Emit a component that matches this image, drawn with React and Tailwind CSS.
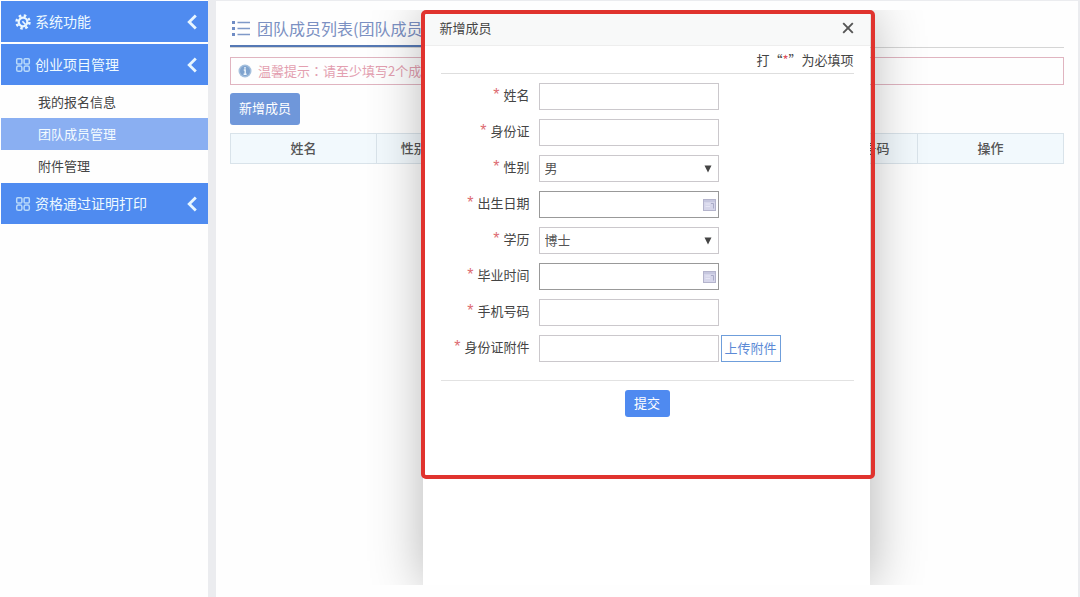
import { Fragment } from "react";

const subItems = [
  { label: "我的报名信息", active: false },
  { label: "团队成员管理", active: true },
  { label: "附件管理", active: false },
];

const fields = [
  { id: "name", label: "姓名", type: "text" },
  { id: "idcard", label: "身份证", type: "text" },
  { id: "gender", label: "性别", type: "select", options: ["男", "女"] },
  { id: "birthday", label: "出生日期", type: "date" },
  { id: "education", label: "学历", type: "select", options: ["博士", "硕士", "本科"] },
  { id: "graduation", label: "毕业时间", type: "date" },
  { id: "phone", label: "手机号码", type: "text" },
  { id: "attachment", label: "身份证附件", type: "file" },
];

function GearIcon() {
  return (
    <svg viewBox="0 0 16 16" className="size-4 shrink-0" fill="none" stroke="#eaf7ff">
      <circle cx="8" cy="8" r="4.3" strokeWidth="2.2" />
      <circle cx="8" cy="8" r="6.4" strokeWidth="2.6" strokeDasharray="2.5 2.527" />
      <path d="M7.4 7.2 10.6 10.6" strokeWidth="1.6" />
    </svg>
  );
}

function BlocksIcon() {
  return (
    <svg viewBox="0 0 16 16" className="size-4 shrink-0" fill="none" stroke="#b9dafa" strokeWidth="1.5">
      <rect x="1.7" y="1.7" width="5.2" height="5.2" rx="1" />
      <rect x="9.1" y="1.7" width="5.2" height="5.2" rx="1" />
      <rect x="1.7" y="9.1" width="5.2" height="5.2" rx="1.6" />
      <rect x="9.1" y="9.1" width="5.2" height="5.2" rx="1.6" />
    </svg>
  );
}

function Chevron() {
  return (
    <svg viewBox="0 0 10 16" className="ml-auto h-4 w-[10px] shrink-0" fill="none" stroke="#e8f6ff" strokeWidth="2.8">
      <path d="M8.8 1.4 2.2 8l6.600 6.600" />
    </svg>
  );
}

function ListIcon() {
  return (
    <svg viewBox="0 0 18 16" className="h-4 w-[18px] shrink-0" stroke="#7f99c8" fill="#6f8cc4">
      <path d="M5.500 2.500h12.500M5.500 8.500h12.500M5.500 14.500h12.500" strokeWidth="1.6" />
      <g stroke="none">
        <rect x="0" y="1" width="3" height="3" />
        <rect x="0" y="7" width="3" height="3" />
        <rect x="0" y="13" width="3" height="3" />
      </g>
    </svg>
  );
}

function InfoIcon() {
  return (
    <svg viewBox="0 0 14 14" className="size-[14px] shrink-0">
      <circle cx="7" cy="7" r="6.5" fill="#a3bfdd" />
      <circle cx="7" cy="7" r="5" fill="#7fa3ce" />
      <path d="M7 3v1.8M5.8 6h1.4v4.2M5.6 10.2h3" stroke="#eef5fc" strokeWidth="1.4" fill="none" />
    </svg>
  );
}

function CalendarIcon() {
  return (
    <svg viewBox="0 0 13 12" className="h-3 w-[13px]">
      <rect x="0.5" y="0.5" width="12" height="11" fill="#d6d6ea" stroke="#b4b4cc" />
      <path d="M1 2h11" stroke="#bfc1da" strokeWidth="1.4" />
      <path d="M8 4.500h2.500v5" stroke="#a9abc6" fill="none" />
      <path d="M2.500 5h4.500M2.500 7.500h4.500" stroke="#e6e6f5" />
    </svg>
  );
}

function NavGroup({ icon, label }) {
  return (
    <button type="button" className="flex h-[41px] w-full items-center gap-1 bg-[#4f8bf0] pr-[11px] pl-[14px] text-left text-sm text-[#eefaff]">
      {icon}
      <span className="pb-[2px]">{label}</span>
      <Chevron />
    </button>
  );
}

function Field({ field }) {
  const light = "h-[27px] w-[180px] border border-[#cbc8cc] bg-white px-[5px] pb-[2px] text-[13px] text-[#555] outline-none";
  const dark = "h-[27px] w-[180px] border border-[#999] bg-white px-[5px] pb-[2px] text-[13px] text-[#555] outline-none";
  if (field.type === "select") {
    return (
      <div className="relative w-[180px]">
        <select id={field.id} className={`${light} block appearance-none`}>
          {field.options.map((o) => (
            <option key={o}>{o}</option>
          ))}
        </select>
        <svg viewBox="0 0 8 8" className="pointer-events-none absolute top-[10px] right-[7px] size-2" fill="#444">
          <path d="M0.500 0.500h7L4 7.500z" />
        </svg>
      </div>
    );
  }
  if (field.type === "date") {
    return (
      <div className="relative w-[180px]">
        <input id={field.id} type="text" className={`${dark} block`} />
        <span className="pointer-events-none absolute inset-y-0 right-[3px] flex items-center">
          <CalendarIcon />
        </span>
      </div>
    );
  }
  if (field.type === "file") {
    return (
      <div className="flex items-center gap-[2px]">
        <input id={field.id} type="text" className={light} />
        <button type="button" className="h-[27px] w-[60px] border border-[#6f9edb] bg-white pb-[2px] text-[13px] whitespace-nowrap text-[#5c8ad6]">
          上传附件
        </button>
      </div>
    );
  }
  return <input id={field.id} type="text" className={light} />;
}

function MemberDialog() {
  return (
    <div role="dialog" aria-labelledby="dialog-title" className="relative flex h-full w-[447px] flex-col bg-white shadow-[1px_1px_50px_rgba(0,0,0,0.3)]">
      <header className="flex h-9 items-center justify-between border-b border-[#eee] bg-[#f8f9f9] pt-px pr-4 pl-[17px]">
        <h2 id="dialog-title" className="text-[13px] text-[#444]">新增成员</h2>
        <button type="button" aria-label="关闭" className="block">
          <svg viewBox="0 0 12 12" className="size-3" stroke="#555" strokeWidth="1.9">
            <path d="M1.200 1.200l9.600 9.600M10.800 1.200l-9.600 9.600" />
          </svg>
        </button>
      </header>
      <form className="pr-4 pl-[18px]" onSubmit={(e) => e.preventDefault()}>
        <p className="h-7 border-b border-[#dedede] text-right text-[13px] leading-7 text-[#444]">
          打“<span className="text-[#e0525c]">*</span>”为必填项
        </p>
        <div className="grid grid-cols-[89px_auto] items-center justify-start gap-x-[9px] gap-y-[9px] pt-[9px] pb-[18px]">
          {fields.map((f) => (
            <Fragment key={f.id}>
              <label htmlFor={f.id} className="pb-1 text-right text-[13px] leading-5 whitespace-nowrap text-[#444]">
                <span className="mr-1 font-['Liberation_Sans',sans-serif] text-base leading-5 text-[#dd6b72]">*</span>
                {f.label}
              </label>
              <Field field={f} />
            </Fragment>
          ))}
        </div>
        <div className="flex justify-center border-t border-[#e2e2e2] pt-[9px]">
          <button type="submit" className="h-[27px] w-[45px] rounded-[3px] bg-[#4f8af0] pb-[2px] text-[13px] text-white">
            提交
          </button>
        </div>
      </form>
      <div className="pointer-events-none absolute top-0 -right-[5px] -left-[2px] h-[469px] rounded-[5px] border-4 border-[#e0332e]" />
    </div>
  );
}

export default function App() {
  return (
    <div className="flex min-h-screen bg-[#ebecef] font-['Noto_Sans_CJK_SC',sans-serif]">
      <aside className="w-[208px] shrink-0 bg-[#fefefe] pt-px pl-px">
        <nav>
          <NavGroup icon={<GearIcon />} label="系统功能" />
          <div className="h-[2px]" />
          <NavGroup icon={<BlocksIcon />} label="创业项目管理" />
          <ul className="py-px">
            {subItems.map((item) => (
              <li key={item.label}>
                <a
                  href="#"
                  className={
                    item.active
                      ? "block bg-[#8aaff2] pl-[37px] text-[13px] leading-8 text-[#f3fbff]"
                      : "block pl-[37px] text-[13px] leading-8 text-[#444]"
                  }
                >
                  {item.label}
                </a>
              </li>
            ))}
          </ul>
          <NavGroup icon={<BlocksIcon />} label="资格通过证明打印" />
        </nav>
      </aside>

      <main className="relative mt-px mr-[2px] ml-2 min-w-0 flex-1 bg-[#fefefe] pr-[14px] pl-[14px]">
        <div className="flex h-[47px] border-b border-[#d5d5d5]">
          <h1 className="flex h-[46px] items-center gap-[7px] border-b-2 border-[#5578b4] pt-[10px] pr-2 pl-[2px] text-base whitespace-nowrap text-[#7b90c2]">
            <ListIcon />
            <span>团队成员列表(团队成员</span>
          </h1>
        </div>
        <p className="mt-[9px] flex h-7 items-center gap-[6px] border border-[#e0b4c0] pl-[7px] text-[13px] text-[#e39fb0]">
          <InfoIcon />
          <span>
            温馨提示<span className="font-['Noto_Sans_CJK_TC',sans-serif]" lang="zh-TW">：</span>请至少填写2个成员
          </span>
        </p>
        <button type="button" className="mt-2 block h-8 w-[70px] rounded-[3px] bg-[#6f97da] pb-[2px] text-[13px] text-white">
          新增成员
        </button>
        <table className="mt-2 w-full table-fixed border-collapse text-[13px] text-[#555]">
          <thead>
            <tr className="h-[30px] bg-[#f2f9fd]">
              <th className="w-[17.5%] border border-[#d9e3ea] pb-[2px] font-medium">姓名</th>
              <th className="w-[9%] border border-[#d9e3ea] pb-[2px] font-medium">性别</th>
              <th className="border border-[#d9e3ea] pb-[2px] font-medium" />
              <th className="w-[13%] border border-[#d9e3ea] pb-[2px] font-medium">手机号码</th>
              <th className="w-[17.5%] border border-[#d9e3ea] pb-[2px] font-medium">操作</th>
            </tr>
          </thead>
        </table>

        <div className="pointer-events-none absolute top-[9px] right-[2px] bottom-3 left-0 flex justify-center overflow-hidden">
          <div className="pointer-events-auto h-full">
            <MemberDialog />
          </div>
        </div>
      </main>
    </div>
  );
}
